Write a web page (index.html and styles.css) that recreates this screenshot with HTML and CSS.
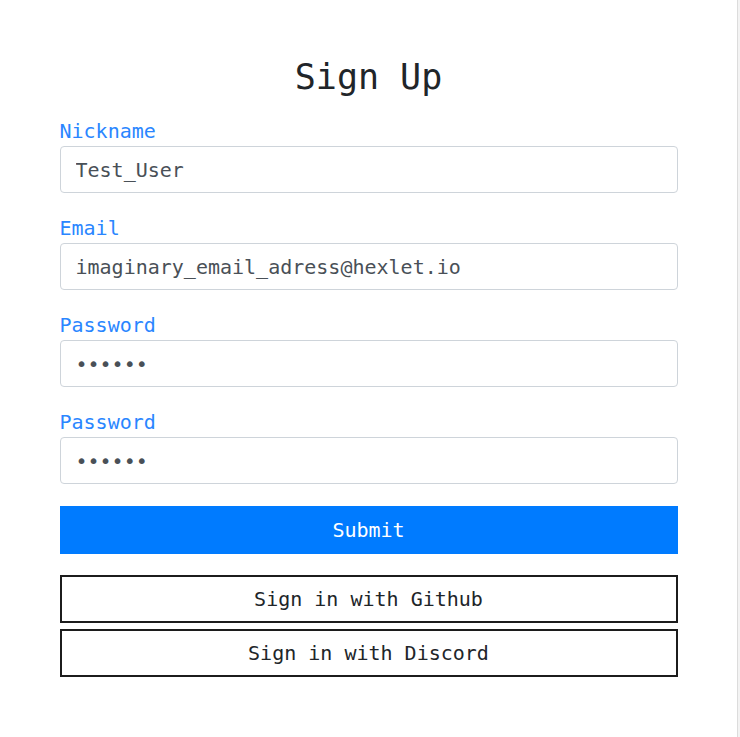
FILE: index.html
```html
<!DOCTYPE html>
<html lang="en">
<head>
  <meta charset="UTF-8">
  <meta name="viewport" content="width=device-width, initial-scale=1.0">
  <title>Sign Up</title>
  <link rel="stylesheet" href="styles.css">
</head>
<body>
  <div class="page">
    <form class="signup-form">
      <h1 class="title">Sign Up</h1>

      <div class="field">
        <label for="nickname">Nickname</label>
        <input id="nickname" type="text" value="Test_User">
      </div>

      <div class="field">
        <label for="email">Email</label>
        <input id="email" type="email" value="imaginary_email_adress@hexlet.io">
      </div>

      <div class="field">
        <label for="password">Password</label>
        <input id="password" type="password" value="123456">
      </div>

      <div class="field field-last">
        <label for="passwordConfirm">Password</label>
        <input id="passwordConfirm" type="password" value="123456">
      </div>

      <button type="submit" class="primary-btn">Submit</button>

      <div class="oauth-group">
        <button type="button" class="outline-btn">Sign in with Github</button>
        <button type="button" class="outline-btn">Sign in with Discord</button>
      </div>
    </form>
  </div>
</body>
</html>
```

FILE: styles.css
```css
:root {
  --primary-color: #007bff;
  --label-color: #2a86ff;
  --text-color: #212529;
  --input-text: #495057;
  --input-border: #ced4da;
  --outline-color: #1c1c1c;
}

* {
  margin: 0;
  padding: 0;
  box-sizing: border-box;
}

html {
  background: #f3f3f3;
}

body {
  font-family: 'DejaVu Sans Mono', 'Liberation Mono', monospace;
  color: var(--text-color);
}

.page {
  width: 738px;
  min-height: 100vh;
  background: #ffffff;
  border-right: 1px solid #dcdcdc;
  padding-top: 57px;
}

.signup-form {
  width: 618px;
  margin: 0 auto;
}

.title {
  font-size: 35px;
  font-weight: 400;
  line-height: 40px;
  text-align: center;
  margin-bottom: 23px;
}

.field {
  margin-bottom: 24px;
}

.field-last {
  margin-bottom: 22px;
}

.field label {
  display: block;
  font-size: 20px;
  line-height: 22px;
  color: var(--label-color);
  margin-bottom: 4px;
}

.field input {
  display: block;
  width: 100%;
  height: 47px;
  padding: 10px 15px;
  font-family: inherit;
  font-size: 20px;
  line-height: 25px;
  color: var(--input-text);
  background: #ffffff;
  border: 1px solid var(--input-border);
  border-radius: 4px;
  outline: none;
}

button {
  display: block;
  width: 100%;
  height: 48px;
  font-family: inherit;
  font-size: 20px;
  cursor: pointer;
}

.primary-btn {
  background-color: var(--primary-color);
  color: #ffffff;
  border: none;
}

.oauth-group {
  display: flex;
  flex-direction: column;
  gap: 6px;
  margin-top: 21px;
}

.outline-btn {
  background: #ffffff;
  color: var(--text-color);
  border: 2px solid var(--outline-color);
}
```
